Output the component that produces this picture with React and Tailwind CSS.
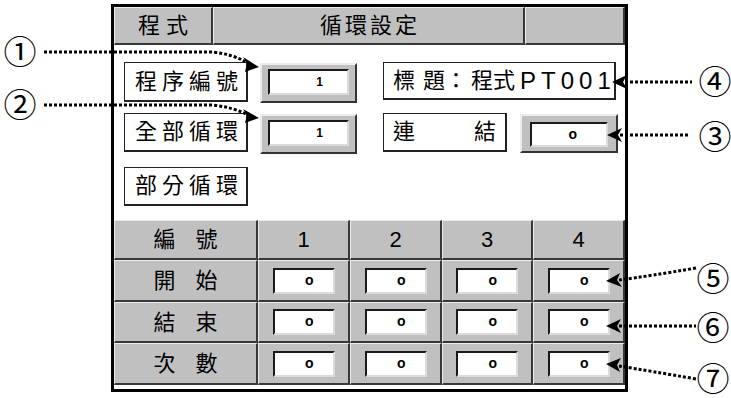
import React from 'react';

const cell =
  'flex items-center justify-center bg-[#c0c0c0] border-t border-l border-[#ececec] border-r-2 border-b-2 border-r-[#383838] border-b-[#383838]';

const Field = ({ children }) => (
  <div className="flex h-[26px] w-[62px] items-center justify-end border-2 border-t-[#1a1a1a] border-l-[#1a1a1a] border-r-[#dcdcdc] border-b-[#dcdcdc] bg-white pr-[19px] pb-[2px] text-[14px] font-bold leading-none">
    {children}
  </div>
);

const LabelBox = ({ children, className }) => (
  <div
    className={
      'flex items-center border-t border-l border-[#222] border-r-2 border-b-2 border-r-[#222] border-b-[#222] bg-white text-[22px] leading-none ' +
      className
    }
  >
    {children}
  </div>
);

const Circled = ({ children, className }) => (
  <span
    className={
      "absolute flex h-[30px] w-[30px] items-center justify-center overflow-visible font-['Noto_Sans_CJK_JP',sans-serif] text-[33px] leading-[30px] " +
      className
    }
  >
    {children}
  </span>
);

const rows = [
  ['開', '始'],
  ['結', '束'],
  ['次', '數'],
];

export default function App() {
  return (
    <div className="relative h-[398px] w-[731px] overflow-hidden bg-white text-black font-['Liberation_Sans','Noto_Sans_CJK_TC',sans-serif]">
      <div className="pl-[111px] pt-[4px]">
        <div className="flex h-[388px] w-[517px] flex-col border-[3px] border-black bg-white">
          {/* title bar */}
          <div className="flex h-[38px] bg-[#c0c0c0]">
            <div className={cell + ' w-[99px] text-[22px] tracking-[6px] pl-[6px]'}>程式</div>
            <div className={cell + ' w-[312px] text-[22px] tracking-[3px] pl-[3px]'}>循環設定</div>
            <div className={cell + ' flex-1'} />
          </div>

          {/* settings */}
          <div className="flex h-[175px] flex-col pl-[10px]">
            <div className="mt-[17px] flex items-start">
              <LabelBox className="h-[40px] w-[124px] pl-[10px] tracking-[5px]">程序編號</LabelBox>
              <div className="ml-[12px] mt-[1px] flex h-[40px] w-[97px] border-2 border-t-[#ececec] border-l-[#ececec] border-r-[#333] border-b-[#333] bg-[#c0c0c0] pl-[6px] pt-[4px]">
                <div className="flex h-[26px] w-[81px] items-center justify-end border-2 border-t-[#1a1a1a] border-l-[#1a1a1a] border-r-[#dcdcdc] border-b-[#dcdcdc] bg-white pr-[24px] text-[12px] font-bold leading-none">
                  1
                </div>
              </div>
              <LabelBox className="ml-[26px] h-[38px] w-[233px] overflow-hidden pl-[9px] whitespace-nowrap">
                <span>標</span>
                <span className="ml-[8px]">題</span>
                <span>：</span>
                <span className="ml-[4px]">程式</span>
                <span className="ml-[5px] text-[24px] tracking-[5px]">PT001</span>
              </LabelBox>
            </div>

            <div className="mt-[10px] flex items-start">
              <LabelBox className="h-[39px] w-[124px] pl-[10px] tracking-[5px]">全部循環</LabelBox>
              <div className="ml-[12px] mt-[1px] flex h-[40px] w-[97px] border-2 border-t-[#ececec] border-l-[#ececec] border-r-[#333] border-b-[#333] bg-[#c0c0c0] pl-[6px] pt-[4px]">
                <div className="flex h-[26px] w-[81px] items-center justify-end border-2 border-t-[#1a1a1a] border-l-[#1a1a1a] border-r-[#dcdcdc] border-b-[#dcdcdc] bg-white pr-[24px] text-[12px] font-bold leading-none">
                  1
                </div>
              </div>
              <LabelBox className="ml-[26px] h-[39px] w-[124px] justify-between px-[9px]">
                <span>連</span>
                <span>結</span>
              </LabelBox>
              <div className="ml-[13px] mt-[1px] flex h-[39px] w-[98px] border-2 border-t-[#ececec] border-l-[#ececec] border-r-[#333] border-b-[#333] bg-[#c0c0c0] pl-[8px] pt-[6px]">
                <div className="flex h-[25px] w-[78px] items-center justify-end border-2 border-t-[#1a1a1a] border-l-[#1a1a1a] border-r-[#dcdcdc] border-b-[#dcdcdc] bg-white pr-[29px] pb-[2px] text-[14px] font-bold leading-none">
                  o
                </div>
              </div>
            </div>

            <div className="mt-[13px] flex">
              <LabelBox className="h-[39px] w-[124px] pl-[10px] tracking-[5px]">部分循環</LabelBox>
            </div>
          </div>

          {/* loop table */}
          <div className="grid grid-cols-[144px_92px_92px_91px_92px] grid-rows-[40px_42px_41px_42px]">
            <div className={cell + ' gap-[20px] text-[22px]'}>
              <span>編</span>
              <span>號</span>
            </div>
            {['1', '2', '3', '4'].map((n) => (
              <div key={n} className={cell + ' text-[22px] font-light'}>
                {n}
              </div>
            ))}
            {rows.map(([a, b]) => (
              <React.Fragment key={a}>
                <div className={cell + ' gap-[20px] text-[22px]'}>
                  <span>{a}</span>
                  <span>{b}</span>
                </div>
                {[0, 1, 2, 3].map((i) => (
                  <div key={i} className={cell}>
                    <Field>o</Field>
                  </div>
                ))}
              </React.Fragment>
            ))}
          </div>
        </div>
      </div>

      {/* callouts */}
      <svg className="pointer-events-none absolute inset-0" width="731" height="398" viewBox="0 0 731 398">
        <g fill="none" stroke="#000" strokeWidth="3" strokeDasharray="3 2">
          <path d="M44 52 L212 52 Q232 54 246 62" />
          <path d="M44 105 L212 105 Q232 107 246 114" />
          <path d="M625 82 L692 82" />
          <path d="M620 135 L688 135" />
          <path d="M619 280 Q650 276 696 268" />
          <path d="M619 326 L696 326" />
          <path d="M619 366 Q650 371 696 379" />
        </g>
        <g fill="#000">
          <polygon points="259,67 243,57 247,63 245,72" />
          <polygon points="259,118 243,109 247,115 245,123" />
          <polygon points="612,82 627,75 623,82 627,89" />
          <polygon points="607,135 622,128 618,135 622,142" />
          <polygon points="606,281 620,273 617,280 622,287" />
          <polygon points="606,326 621,319 617,326 621,333" />
          <polygon points="606,364 621,358 617,365 620,372" />
        </g>
      </svg>
      <Circled className="left-[5px] top-[35px]">①</Circled>
      <Circled className="left-[5px] top-[88px]">②</Circled>
      <Circled className="left-[700px] top-[120px]">③</Circled>
      <Circled className="left-[700px] top-[65px]">④</Circled>
      <Circled className="left-[698px] top-[262px]">⑤</Circled>
      <Circled className="left-[698px] top-[311px]">⑥</Circled>
      <Circled className="left-[698px] top-[362px]">⑦</Circled>
    </div>
  );
}
